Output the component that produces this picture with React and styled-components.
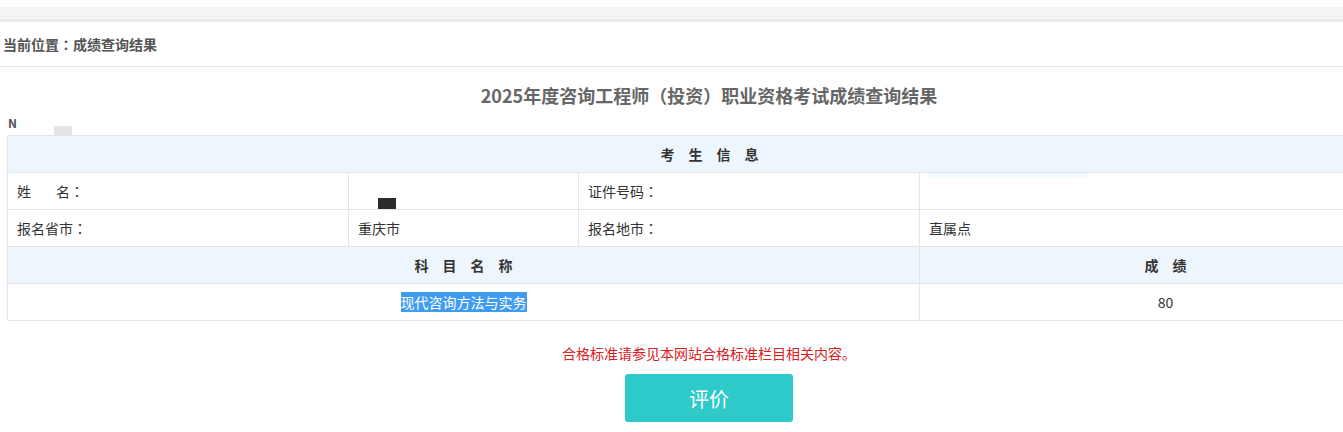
import React from 'react'
import styled, { createGlobalStyle } from 'styled-components'

const GlobalStyle = createGlobalStyle`
  html, body {
    margin: 0;
    padding: 0;
    background: #fff;
    overflow: hidden;
  }
  body {
    font-family: "Noto Sans CJK SC", "Noto Sans", "Liberation Sans", sans-serif;
    color: #333;
  }
`

const Page = styled.div`
  width: 1418px;
  padding-top: 7px;
`

const TopBand = styled.div`
  height: 12px;
  background: #f4f4f5;
  border-bottom: 3px solid #e9eaeb;
`

const Crumb = styled.div`
  height: 44px;
  display: flex;
  align-items: center;
  padding-left: 3px;
  font-size: 14px;
  font-weight: bold;
  color: #555;
  border-bottom: 1px solid #e6e7e8;
`

/* full-width colon drawn centred, as in the original page font */
const Colon = styled.span`
  font-family: "Noto Sans CJK JP", "Noto Sans CJK SC", sans-serif;
`

const Title = styled.h1`
  margin: 14px 0 0;
  height: 28px;
  line-height: 28px;
  text-align: center;
  font-size: 18px;
  font-weight: bold;
  color: #666;
`

const NoteLine = styled.div`
  height: 26px;
  display: flex;
  align-items: flex-start;
  padding-left: 8px;
  font-size: 12px;
  font-weight: bold;
  color: #555;
  line-height: 27px;
`

const GrayMark = styled.span`
  width: 18px;
  height: 9px;
  margin: 17px 0 0 37px;
  background: #e4e4e4;
`

const Table = styled.table`
  margin-left: 7px;
  width: 1404px;
  border-collapse: collapse;
  table-layout: fixed;
  font-size: 14px;
`

const Row = styled.tr`
  height: 37px;
  background: ${p => (p.$head ? '#eef6fd' : '#fff')};
`

const Cell = styled.td`
  position: relative;
  border: 1px solid #e3e5e7;
  padding: 0 9px;
  text-align: ${p => (p.$center ? 'center' : 'left')};
  font-weight: ${p => (p.$bold ? 'bold' : 'normal')};
  color: #333;
  vertical-align: middle;
`

const Spaced = styled.span`
  letter-spacing: 14px;
  padding-left: 14px;
`

const Gap = styled.span`
  display: inline-block;
  width: 25px;
`

const Redact = styled.span`
  position: absolute;
  left: 29px;
  bottom: 0;
  width: 18px;
  height: 11px;
  background: #2b2b2b;
`

const Smear = styled.span`
  position: absolute;
  left: 8px;
  top: 0;
  width: 160px;
  height: 5px;
  border-radius: 0 0 60px 20px;
  background: #f3fafd;
`

const Selected = styled.span`
  background: #3f9cf0;
  color: #fff;
`

const Notice = styled.p`
  margin: 22px 0 0;
  text-align: center;
  font-size: 14px;
  line-height: 20px;
  color: #d8201c;
`

const ButtonRow = styled.div`
  display: flex;
  justify-content: center;
  margin-top: 11px;
`

const RateButton = styled.button`
  width: 168px;
  height: 48px;
  border: none;
  border-radius: 3px;
  background: #2ec9c9;
  color: #fff;
  font-family: inherit;
  font-size: 20px;
  cursor: pointer;
`

function App() {
  return (
    <Page>
      <GlobalStyle />
      <TopBand />
      <Crumb>
        当前位置<Colon>：</Colon>成绩查询结果
      </Crumb>
      <Title>2025年度咨询工程师（投资）职业资格考试成绩查询结果</Title>
      <NoteLine>
        N<GrayMark />
      </NoteLine>
      <Table>
        <colgroup>
          <col style={{ width: 341 }} />
          <col style={{ width: 230 }} />
          <col style={{ width: 341 }} />
          <col style={{ width: 492 }} />
        </colgroup>
        <tbody>
          <Row $head>
            <Cell colSpan={4} $center $bold>
              <Spaced>考生信息</Spaced>
            </Cell>
          </Row>
          <Row>
            <Cell>
              姓<Gap />名<Colon>：</Colon>
            </Cell>
            <Cell>
              <Redact />
            </Cell>
            <Cell>
              证件号码<Colon>：</Colon>
            </Cell>
            <Cell>
              <Smear />
            </Cell>
          </Row>
          <Row>
            <Cell>
              报名省市<Colon>：</Colon>
            </Cell>
            <Cell>重庆市</Cell>
            <Cell>
              报名地市<Colon>：</Colon>
            </Cell>
            <Cell>直属点</Cell>
          </Row>
          <Row $head>
            <Cell colSpan={3} $center $bold>
              <Spaced>科目名称</Spaced>
            </Cell>
            <Cell $center $bold>
              <Spaced>成绩</Spaced>
            </Cell>
          </Row>
          <Row>
            <Cell colSpan={3} $center>
              <Selected>现代咨询方法与实务</Selected>
            </Cell>
            <Cell $center>80</Cell>
          </Row>
        </tbody>
      </Table>
      <Notice>合格标准请参见本网站合格标准栏目相关内容。</Notice>
      <ButtonRow>
        <RateButton>评价</RateButton>
      </ButtonRow>
    </Page>
  )
}

export default App
